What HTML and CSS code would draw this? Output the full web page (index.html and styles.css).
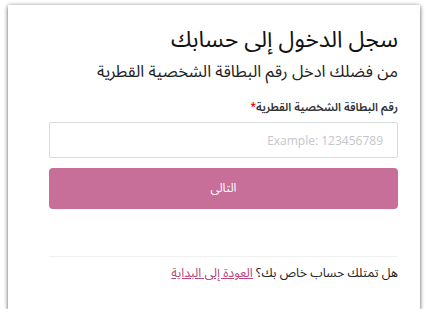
FILE: index.html
```html
<!DOCTYPE html>
<html lang="ar" dir="rtl">
<head>
<meta charset="utf-8">
<link rel="stylesheet" href="styles.css">
</head>
<body>
<div class="card">
  <h1 class="title">سجل الدخول إلى حسابك</h1>
  <p class="subtitle">من فضلك ادخل رقم البطاقة الشخصية القطرية</p>
  <label class="label" for="qid">رقم البطاقة الشخصية القطرية<span class="req">*</span></label>
  <input id="qid" class="input" type="text" placeholder="Example: 123456789" dir="ltr">
  <button class="btn">التالى</button>
  <hr class="divider">
  <p class="footer">هل تمتلك حساب خاص بك؟ <a class="link" href="#">العودة إلى البداية</a></p>
</div>
</body>
</html>
```
FILE: styles.css
```css
html, body { margin: 0; padding: 0; background: #ffffff; }
body {
  font-family: "Noto Sans Arabic", "DejaVu Sans", "Noto Sans", sans-serif;
  padding: 5px 9px 0 8px;
}
.card {
  background: #fff;
  height: 304px;
  box-sizing: border-box;
  box-shadow: 0 2px 4px rgba(0,0,0,0.45), 0 0 4px rgba(0,0,0,0.3);
  padding: 20px 22px 0 41px;
  display: flex;
  flex-direction: column;
}
.title {
  margin: 0;
  font-size: 23px;
  font-weight: 400;
  color: #111;
  line-height: 30px;
}
.subtitle {
  margin: 6px 0 0;
  font-size: 16.5px;
  color: #222;
  line-height: 22px;
}
.label {
  margin-top: 15px;
  font-size: 11.5px;
  color: #333;
  line-height: 18px;
  font-weight: 600;
}
.req { color: #e00; font-size: 10px; vertical-align: top; }
.input {
  margin-top: 6px;
  height: 36px;
  box-sizing: border-box;
  border: 1px solid #d8dde3;
  border-radius: 2px;
  padding: 0 14px;
  font-family: "Open Sans", sans-serif;
  font-size: 12px;
  text-align: right;
}
.input::placeholder { color: #c3c6cb; }
.btn {
  margin-top: 10px;
  height: 41px;
  border: none;
  border-radius: 4px;
  background: #c76e99;
  color: #fff;
  font-family: inherit;
  font-size: 12px;
}
.divider {
  margin: 47px 0 0;
  border: none;
  border-top: 1px solid #f0f0f0;
  height: 0;
}
.footer {
  margin: 6px 0 0;
  font-size: 12.5px;
  color: #222;
  line-height: 20px;
}
.link { color: #b5457c; text-decoration: underline; }
```
